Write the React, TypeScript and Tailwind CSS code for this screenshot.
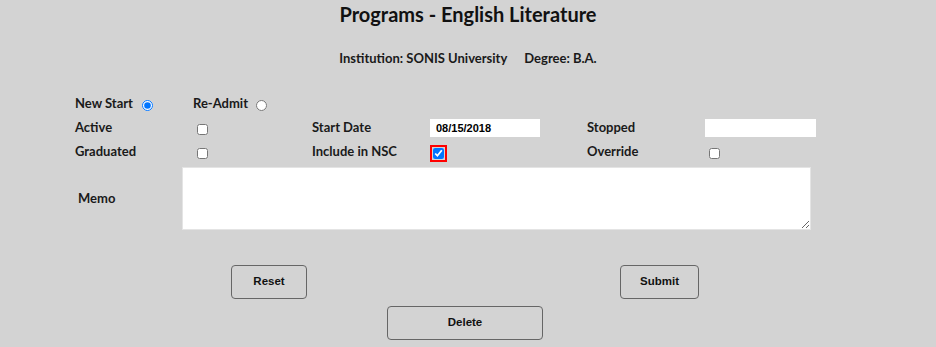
import React from "react";

const label = "font-['Lato',sans-serif] font-bold text-[13px] text-[#1a1a1a]";
const box = "w-[11px] h-[11px] m-0";

const App = () => {
  return (
    <section className="w-[936px] h-[347px] bg-[#d3d3d3] overflow-hidden">
      <h1 className="h-[28px] leading-[28px] text-center font-['Lato',sans-serif] font-bold text-[20px] text-[#111]">
        Programs - English Literature
      </h1>
      <div className={`mt-[21px] h-[20px] flex items-center justify-center gap-[17px] ${label} text-[12px]`}>
        <span>Institution: SONIS University</span>
        <span>Degree: B.A.</span>
      </div>

      <div className="mt-[23px] pl-[75px]">
        <div className="h-[24px] flex items-center">
          <div className="w-[118px] flex items-center">
            <span className={label}>New Start</span>
            <input type="radio" name="start" defaultChecked className={`${box} ml-[9px] mt-[3px]`} />
          </div>
          <div className="flex items-center">
            <span className={label}>Re-Admit</span>
            <input type="radio" name="start" className={`${box} ml-[8px] mt-[3px]`} />
          </div>
        </div>

        <div className="h-[24px] grid grid-cols-[118px_119px_118px_157px_118px_111px] items-center">
          <span className={label}>Active</span>
          <div className="flex"><input type="checkbox" className={`${box} ml-[4px] mt-[3px]`} /></div>
          <span className={label}>Start Date</span>
          <input
            type="text"
            defaultValue="08/15/2018"
            className="w-[110px] h-[18px] bg-white px-[6px] font-['Liberation_Sans',sans-serif] font-bold text-[11px] text-black outline-none"
          />
          <span className={label}>Stopped</span>
          <input type="text" className="w-[111px] h-[18px] bg-white outline-none" />
        </div>

        <div className="h-[24px] grid grid-cols-[118px_119px_118px_157px_118px_111px] items-center">
          <span className={label}>Graduated</span>
          <div className="flex"><input type="checkbox" className={`${box} ml-[4px] mt-[3px]`} /></div>
          <span className={label}>Include in NSC</span>
          <div className="flex">
            <input
              type="checkbox"
              defaultChecked
              className={`${box} ml-[3px] mt-[3px] outline-2 outline-[#ff0000] outline-offset-[1px]`}
            />
          </div>
          <span className={label}>Override</span>
          <div className="flex"><input type="checkbox" className={`${box} ml-[4px] mt-[3px]`} /></div>
        </div>

        <div className="mt-[3px] flex items-center">
          <span className={`${label} w-[107px] pl-[3px]`}>Memo</span>
          <textarea className="w-[629px] h-[63px] bg-white border border-[#e4e4e4] outline-none" />
        </div>
      </div>

      <div className="mt-[35px] flex pl-[231px] font-['Liberation_Sans',sans-serif] font-bold text-[11.5px] text-[#111]">
        <button className="w-[76px] h-[34px] border border-[#666] rounded-[4px]">Reset</button>
        <button className="ml-[313px] w-[79px] h-[34px] border border-[#666] rounded-[4px]">Submit</button>
      </div>
      <div className="mt-[7px] pl-[387px] font-['Liberation_Sans',sans-serif] font-bold text-[11.5px] text-[#111]">
        <button className="w-[156px] h-[34px] border border-[#666] rounded-[4px]">Delete</button>
      </div>
    </section>
  );
};

export default App;
